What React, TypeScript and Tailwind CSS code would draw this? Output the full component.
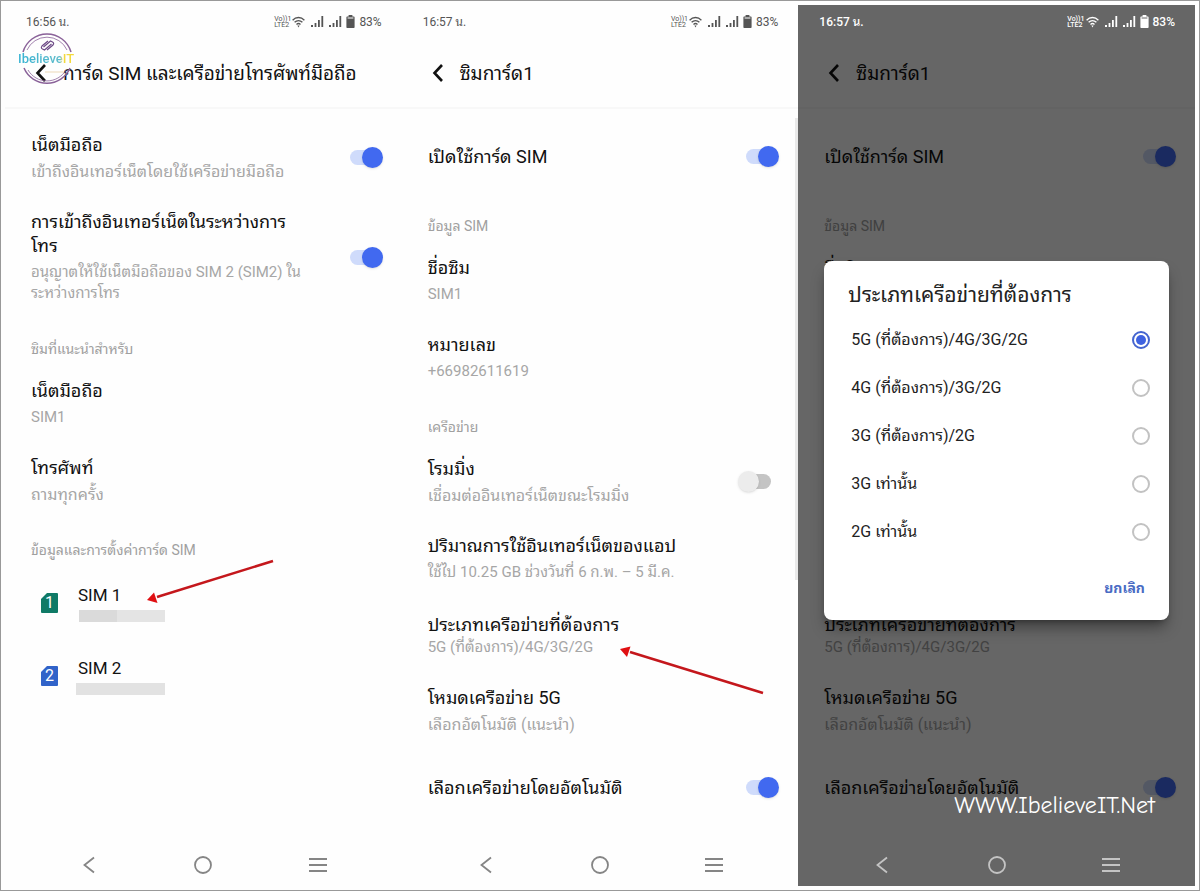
import { ReactNode, useState } from "react";
import clsx from "clsx";

type Item = {
  kind: "row" | "label";
  title: string;
  detail?: string;
  tight?: boolean;
  toggle?: boolean;
};

const networkItems: Item[] = [
  { kind: "row", title: "เน็ตมือถือ", detail: "เข้าถึงอินเทอร์เน็ตโดยใช้เครือข่ายมือถือ", toggle: true },
  {
    kind: "row",
    title: "การเข้าถึงอินเทอร์เน็ตในระหว่างการ\nโทร",
    detail: "อนุญาตให้ใช้เน็ตมือถือของ SIM 2 (SIM2) ใน\nระหว่างการโทร",
    toggle: true
  },
  { kind: "label", title: "ซิมที่แนะนำสำหรับ" },
  { kind: "row", title: "เน็ตมือถือ", detail: "SIM1" },
  { kind: "row", title: "โทรศัพท์", detail: "ถามทุกครั้ง" },
  { kind: "label", title: "ข้อมูลและการตั้งค่าการ์ด SIM" }
];

const simItems: Item[] = [
  { kind: "row", title: "เปิดใช้การ์ด SIM", toggle: true },
  { kind: "label", title: "ข้อมูล SIM" },
  { kind: "row", title: "ชื่อซิม", detail: "SIM1" },
  { kind: "row", title: "หมายเลข", detail: "+66982611619" },
  { kind: "label", title: "เครือข่าย" },
  { kind: "row", title: "โรมมิ่ง", detail: "เชื่อมต่ออินเทอร์เน็ตขณะโรมมิ่ง", toggle: false },
  {
    kind: "row",
    title: "ปริมาณการใช้อินเทอร์เน็ตของแอป",
    detail: "ใช้ไป 10.25 GB ช่วงวันที่ 6 ก.พ. – 5 มี.ค."
  },
  { kind: "row", title: "ประเภทเครือข่ายที่ต้องการ", detail: "5G (ที่ต้องการ)/4G/3G/2G", tight: true },
  { kind: "row", title: "โหมดเครือข่าย 5G", detail: "เลือกอัตโนมัติ (แนะนำ)" },
  { kind: "row", title: "เลือกเครือข่ายโดยอัตโนมัติ", toggle: true }
];

const networkTypes = [
  "5G (ที่ต้องการ)/4G/3G/2G",
  "4G (ที่ต้องการ)/3G/2G",
  "3G (ที่ต้องการ)/2G",
  "3G เท่านั้น",
  "2G เท่านั้น"
];

// Details with Latin figures are set one step smaller than the all-Thai ones
const hasFigures = (text: string) => /\d/.test(text);

function Signal() {
  return (
    <svg width="13" height="12" viewBox="0 0 13 12" fill="currentColor">
      <rect x="0" y="9" width="2" height="2" />
      <rect x="3.6" y="7" width="1.8" height="4" />
      <rect x="7" y="4" width="1.8" height="7" />
      <rect x="10.4" y="0" width="1.8" height="11" />
    </svg>
  );
}

function StatusBar({ time, light }: { time: string; light?: boolean }) {
  return (
    <div
      className={clsx(
        "relative z-20 flex h-[33px] items-center justify-between pt-px pr-5 pl-[21px] text-xs",
        light ? "font-medium text-white" : "text-[#555]"
      )}
    >
      <span>{time}</span>
      <div className="flex items-center">
        <div className="text-[7px] leading-[6px]">
          <p>Vo))1</p>
          <p>LTE2</p>
        </div>
        <svg className="mr-1.5 ml-px" width="13" height="12" viewBox="0 0 13 12" fill="none" stroke="currentColor" strokeWidth="1.3">
          <path d="M.6 4.2C4 .6 9 .6 12.4 4.2M2.6 6.3c2.3-2.3 5.5-2.3 7.8 0M4.5 8.4c1.2-1.1 2.8-1.1 4 0" />
          <path d="M5.4 9.6h2.2L6.5 11.4z" fill="currentColor" stroke="none" />
        </svg>
        <Signal />
        <span className="w-[5px]" />
        <Signal />
        <svg className="mr-1 ml-1" width="9" height="14" viewBox="0 0 9 14" fill="currentColor">
          <path d="M2.6 0h3.8v1.4h1.2c.6 0 1 .4 1 1V12c0 .6-.4 1-1 1H1.4c-.6 0-1-.4-1-1V2.4c0-.6.4-1 1-1h1.2z" />
          <path d="M1.6 3h5.8" stroke={light ? "#666" : "#fff"} />
        </svg>
        <span>83%</span>
      </div>
    </div>
  );
}

function Header({ title }: { title: string }) {
  return (
    <header className="flex h-[71px] items-center border-b-2 border-[#f8f8f8] pl-7">
      <button aria-label="ย้อนกลับ" className="w-[30px] text-[#111]">
        <svg width="16" height="20" viewBox="0 0 16 20" fill="none" stroke="currentColor" strokeWidth="2.6">
          <path d="M12 2 4.5 10l7.5 8" />
        </svg>
      </button>
      <h1 className="pt-0.5 text-[19px] leading-7 whitespace-nowrap text-[#111]">{title}</h1>
    </header>
  );
}

function Toggle({ label, defaultChecked }: { label: string; defaultChecked: boolean }) {
  const [on, setOn] = useState(defaultChecked);
  return (
    <input
      type="checkbox"
      role="switch"
      aria-label={label}
      checked={on}
      onChange={(e) => setOn(e.target.checked)}
      className="flex h-[21px] w-[41px] shrink-0 appearance-none items-center px-2 before:h-[15px] before:w-[25px] before:rounded-full before:bg-[#c4c4c4] after:absolute after:-ml-2 after:size-[21px] after:rounded-full after:bg-[#ececec] after:shadow-sm checked:before:bg-[#cfdbfb] checked:after:ml-3 checked:after:bg-[#4169f0]"
    />
  );
}

function ItemList({ items }: { items: Item[] }) {
  return (
    <>
      {items.map((item, i) =>
        item.kind === "label" ? (
          <h2 key={i} className="pt-[21px] pb-1.5 text-sm leading-5 text-[#a0a0a0]">
            {item.title}
          </h2>
        ) : (
          <div key={i} className="flex items-center justify-between py-[14px]">
            <div
              className={clsx(
                "flex flex-col justify-center whitespace-pre-line",
                item.tight ? "min-h-[47px]" : "min-h-[49px]"
              )}
            >
              <p className="text-lg leading-6 text-[#111]">{item.title}</p>
              {item.detail && (
                <p
                  className={clsx(
                    "text-[#a6a6a6]",
                    hasFigures(item.detail) ? "text-[15px]" : "text-base",
                    item.tight ? "leading-5" : "mt-1 leading-[21px]"
                  )}
                >
                  {item.detail}
                </p>
              )}
            </div>
            {item.toggle !== undefined && <Toggle label={item.title} defaultChecked={item.toggle} />}
          </div>
        )
      )}
    </>
  );
}

function SimRow({ slot, color, children }: { slot: number; color: string; children: ReactNode }) {
  return (
    <button className="flex h-[73px] w-full items-center pl-2.5 text-left">
      <span className="relative flex h-5 w-[17px] items-center justify-center text-base text-white">
        <svg className={clsx("absolute inset-0", color)} width="17" height="20" viewBox="0 0 17 20" fill="currentColor">
          <path d="M6 0h10q1 0 1 1v18q0 1-1 1H1q-1 0-1-1V6z" />
        </svg>
        <span className="relative">{slot}</span>
      </span>
      <span className="flex flex-col pl-5">
        <span className="text-[17px] leading-6 text-[#111]">SIM {slot}</span>
        <span className="mt-[3px] flex h-3">{children}</span>
      </span>
    </button>
  );
}

function NavBar({ light }: { light?: boolean }) {
  return (
    <nav
      className={clsx(
        "relative z-20 mt-auto grid h-[42px] grid-cols-3 items-center justify-items-center px-[27px]",
        light ? "text-[#c4c4c4]" : "text-[#858585]"
      )}
    >
      <button aria-label="กลับ">
        <svg width="20" height="20" viewBox="0 0 20 20" fill="none" stroke="currentColor" strokeWidth="1.8">
          <path d="M15 2.5 5.5 10l9.5 7.5" />
        </svg>
      </button>
      <button aria-label="หน้าหลัก">
        <svg width="20" height="20" viewBox="0 0 20 20" fill="none" stroke="currentColor" strokeWidth="1.8">
          <circle cx="10" cy="10" r="8" />
        </svg>
      </button>
      <button aria-label="แอปล่าสุด">
        <svg width="20" height="20" viewBox="0 0 20 20" stroke="currentColor" strokeWidth="1.8">
          <path d="M1 4h18M1 10h18M1 16h18" />
        </svg>
      </button>
    </nav>
  );
}

function Phone({ time, title, light, children }: { time: string; title: string; light?: boolean; children: ReactNode }) {
  return (
    <section className="relative flex flex-col">
      <StatusBar time={time} light={light} />
      <Header title={title} />
      {children}
      <NavBar light={light} />
    </section>
  );
}

function Logo() {
  return (
    <div className="absolute top-6 left-3 h-[60px] w-[62px]">
      <svg width="62" height="60" viewBox="0 0 62 60" fill="none">
        <g stroke="#8a6299" strokeWidth="1.5">
          <path d="M6 23A25 25 0 0 1 54 23" />
          <path d="M10 21A22 22 0 0 1 50 21" strokeWidth=".8" />
          <path d="M7 39A25 25 0 0 0 53 39" />
          <path d="M11 41A22 22 0 0 0 49 41" strokeWidth=".8" />
        </g>
        <g stroke="#6d4a86" strokeWidth="1.2">
          <path d="M31 12l-6 5q-1.5 2 .5 3l2 1 7-6" />
          <path d="M30 21l6-5q1.5-2-.5-3l-2-1-7 6" />
        </g>
        <path d="M28 43h18" stroke="#ecd9b8" />
      </svg>
      <span className="absolute top-[22px] left-px bg-gradient-to-r from-[#35b3d3] via-[#5fbccb] via-75% to-[#f3d93b] to-80% bg-clip-text text-[13px] leading-4 font-medium text-transparent">
        IbelieveIT
      </span>
    </div>
  );
}

function NetworkTypeDialog() {
  const [selected, setSelected] = useState(0);
  return (
    <div
      role="dialog"
      aria-labelledby="network-type-title"
      className="absolute inset-x-[26px] top-64 z-20 rounded-lg bg-white px-6 pt-[18px] pb-4 shadow-lg shadow-black/40"
    >
      <h2 id="network-type-title" className="text-[21px] leading-8 text-[#222]">
        ประเภทเครือข่ายที่ต้องการ
      </h2>
      <div className="-mr-[5px] pt-[5px] pl-[3px]">
        {networkTypes.map((name, i) => (
          <label key={name} className="flex h-12 items-center justify-between text-base text-[#222]">
            {name}
            <input
              type="radio"
              name="network-type"
              checked={selected === i}
              onChange={() => setSelected(i)}
              className="grid size-[18px] appearance-none place-items-center rounded-full border-2 border-[#c2c2c2] checked:border-[#4464cf] checked:before:size-2.5 checked:before:rounded-full checked:before:bg-[#3f62e0]"
            />
          </label>
        ))}
      </div>
      <div className="flex justify-end pt-4">
        <button className="h-8 text-sm font-bold text-[#4a6cc4]">ยกเลิก</button>
      </div>
    </div>
  );
}

export default function App() {
  return (
    <main className="grid min-h-screen grid-cols-3 border border-[#999] bg-[#fefefe] p-1 font-[Roboto,'Noto_Sans_Thai_Looped','Noto_Looped_Thai',Loma,'Noto_Sans_Thai','Noto_Sans',sans-serif]">
      <Phone time="16:56 น." title="การ์ด SIM และเครือข่ายโทรศัพท์มือถือ">
        <Logo />
        <div className="pt-[10px] pr-[19px] pl-[26px]">
          <ItemList items={networkItems} />
          <SimRow slot={1} color="text-[#0f7a66]">
            <span className="ml-px w-[38px] bg-[#dadada]" />
            <span className="w-12 bg-[#e4e4e4]" />
          </SimRow>
          <SimRow slot={2} color="text-[#3163c9]">
            <span className="-ml-0.5 w-[89px] bg-[#e2e2e2]" />
          </SimRow>
        </div>
        <svg className="absolute top-[550px] left-[140px]" width="132" height="50" viewBox="0 0 132 50">
          <path d="M128 6 12 42" stroke="#c4171c" strokeWidth="2.5" />
          <path d="M2 45 9 37.5 12.5 48z" fill="#e00f12" />
        </svg>
      </Phone>

      <Phone time="16:57 น." title="ซิมการ์ด1">
        <div className="pt-[9px] pr-[19px] pl-[26px]">
          <ItemList items={simItems} />
        </div>
        <div className="absolute top-[113px] right-0 h-[462px] w-[3px] bg-[#e9e9e9]" />
        <svg className="absolute top-[638px] left-[216px]" width="150" height="54" viewBox="0 0 150 54">
          <path d="M145 50 12 9" stroke="#c4171c" strokeWidth="2.5" />
          <path d="M2 6 12.5 3.5 9 14z" fill="#e00f12" />
        </svg>
      </Phone>

      <Phone time="16:57 น." title="ซิมการ์ด1" light>
        <div className="pt-[9px] pr-[19px] pl-[26px]">
          <ItemList items={simItems} />
        </div>
        <div className="absolute inset-0 z-10 bg-black/60" />
        <NetworkTypeDialog />
        <a
          href="#"
          className="absolute right-10 bottom-[67px] z-20 font-['Comic_Sans_MS','Comic_Neue',cursive] text-2xl leading-7 text-white"
        >
          WWW.IbelieveIT.Net
        </a>
      </Phone>
    </main>
  );
}
